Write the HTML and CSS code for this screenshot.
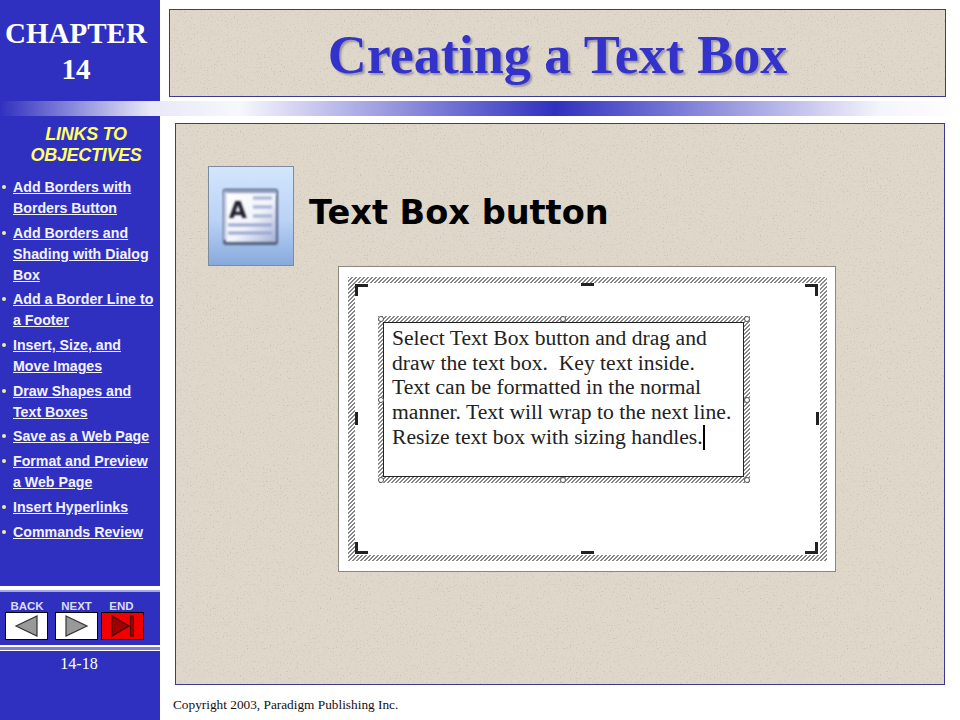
FILE: index.html
```html
<!DOCTYPE html>
<html lang="en">
<head>
<meta charset="utf-8">
<title>Creating a Text Box</title>
<link rel="stylesheet" href="styles.css">
</head>
<body>
<div class="slide">
  <div class="chapter">CHAPTER<br>14</div>
  <header class="title-area">
    <h1 class="title-panel paper">Creating a Text Box</h1>
  </header>
  <div class="band"></div>
  <nav class="sidebar">
    <div class="links-block">
      <h2 class="links-title">LINKS TO<br>OBJECTIVES</h2>
      <ul class="links">
        <li><a href="#">Add Borders with Borders Button</a></li>
        <li><a href="#">Add Borders and Shading with Dialog Box</a></li>
        <li><a href="#">Add a Border Line to a Footer</a></li>
        <li><a href="#">Insert, Size, and Move Images</a></li>
        <li><a href="#">Draw Shapes and Text Boxes</a></li>
        <li><a href="#">Save as a Web Page</a></li>
        <li><a href="#">Format and Preview a Web Page</a></li>
        <li><a href="#">Insert Hyperlinks</a></li>
        <li><a href="#">Commands Review</a></li>
      </ul>
    </div>
    <div class="nav-block">
      <div class="nav-labels">
        <span class="nav-label back">BACK</span>
        <span class="nav-label next">NEXT</span>
        <span class="nav-label end">END</span>
      </div>
      <div class="nav-buttons">
        <a class="nav-btn" href="#"><svg width="41" height="26" viewBox="0 0 41 26"><polygon points="10,13 31,3 31,23" fill="#999" stroke="#333" stroke-width="1.2"/></svg></a>
        <a class="nav-btn" href="#"><svg width="41" height="26" viewBox="0 0 41 26"><polygon points="10,3 31,13 10,23" fill="#999" stroke="#333" stroke-width="1.2"/></svg></a>
        <a class="nav-btn end-btn" href="#"><svg width="41" height="26" viewBox="0 0 41 26"><polygon points="10,3 27,13 10,23" fill="#a00000" stroke="#400" stroke-width="1.2"/><rect x="28.5" y="3" width="3" height="20" fill="#a00000" stroke="#400" stroke-width="1"/></svg></a>
      </div>
    </div>
    <div class="page-no">14-18</div>
  </nav>
  <main class="content">
    <section class="main-panel paper">
      <div class="heading-row">
        <svg class="tb-icon" width="86" height="100" viewBox="0 0 86 100">
          <defs>
            <linearGradient id="bg" x1="0" y1="0" x2="0" y2="1">
              <stop offset="0" stop-color="#d3e6fd"/>
              <stop offset="0.55" stop-color="#b9d2f6"/>
              <stop offset="1" stop-color="#86a9dc"/>
            </linearGradient>
            <linearGradient id="doc" x1="0" y1="0" x2="1" y2="1">
              <stop offset="0" stop-color="#ffffff"/>
              <stop offset="0.55" stop-color="#f2f4fb"/>
              <stop offset="1" stop-color="#a3afd8"/>
            </linearGradient>
            <filter id="soft" x="-20%" y="-20%" width="140%" height="140%"><feGaussianBlur stdDeviation="1"/></filter>
            <filter id="softer" x="-20%" y="-20%" width="140%" height="140%"><feGaussianBlur stdDeviation="0.8"/></filter>
          </defs>
          <rect x="0.5" y="0.5" width="85" height="99" fill="url(#bg)" stroke="#7d8b9c"/>
          <rect x="15" y="23" width="55" height="56" rx="3" fill="#52607d" filter="url(#soft)"/>
          <rect x="15" y="23" width="54" height="6" fill="#8a9abb" filter="url(#soft)"/>
          <rect x="15" y="26" width="5" height="48" fill="#b0bdd8" filter="url(#soft)"/>
          <rect x="18" y="27" width="50" height="49" fill="url(#doc)" filter="url(#softer)"/>
          <g filter="url(#softer)">
            <text x="30" y="52" class="icon-a">A</text>
            <path d="M45 32H64M45 41H64M45 50H64" stroke="#a3b1d1" stroke-width="3"/>
            <path d="M20 59H64M20 67H64" stroke="#9aa6cf" stroke-width="3"/>
          </g>
        </svg>
        <h2 class="heading">Text Box button</h2>
      </div>
      <figure class="shot">
        <div class="hatch outer-frame">
          <span class="mark tl"></span><span class="mark tr"></span><span class="mark bl"></span><span class="mark br"></span>
          <span class="mark tm"></span><span class="mark bm"></span><span class="mark lm"></span><span class="mark rm"></span>
          <div class="hatch inner-frame">
            <span class="dot d1"></span><span class="dot d2"></span><span class="dot d3"></span><span class="dot d4"></span>
            <span class="dot d5"></span><span class="dot d6"></span><span class="dot d7"></span><span class="dot d8"></span>
            <p class="box-text">Select Text Box button and drag and<br>draw the text box.&nbsp; Key text inside.<br>Text can be formatted in the normal<br>manner. Text will wrap to the next line.<br>Resize text box with sizing handles.<span class="caret"></span></p>
          </div>
        </div>
      </figure>
    </section>
    <footer class="copyright">Copyright 2003, Paradigm Publishing Inc.</footer>
  </main>
</div>
</body>
</html>
```
FILE: styles.css
```css
* { box-sizing: border-box; }
html, body { margin: 0; padding: 0; background: #fff; }
.slide {
  width: 960px;
  height: 720px;
  overflow: hidden;
  display: grid;
  grid-template-columns: 160px 800px;
  grid-template-rows: 101px 15px 604px;
}
.paper {
  background-color: #dfd7ca;
  background-image: url("data:image/svg+xml,%3Csvg xmlns='http://www.w3.org/2000/svg' width='300' height='300'%3E%3Cfilter id='n' x='0' y='0' width='100%25' height='100%25'%3E%3CfeTurbulence type='fractalNoise' baseFrequency='0.7' numOctaves='1' seed='7' stitchTiles='stitch'/%3E%3CfeColorMatrix values='0 0 0 0 0.5 0 0 0 0 0.44 0 0 0 0 0.36 2.5 0 0 0 -1.45'/%3E%3C/filter%3E%3Crect width='300' height='300' filter='url(%23n)'/%3E%3C/svg%3E");
  border: 1px solid #3a3a96;
}
.chapter {
  background: #3030c0;
  color: #fff;
  font: bold 29px/36px "Liberation Serif", serif;
  text-align: center;
  padding: 15px 8px 0 0;
  white-space: nowrap;
}
.title-area { padding: 9px 14px 4px 9px; }
.title-panel {
  margin: 0;
  height: 88px;
  color: #3333cc;
  font: bold 54px/90px "Liberation Serif", serif;
  text-align: center;
  text-shadow: 2px 2px 2px #9a96a0;
}
.band {
  grid-column: 1 / 3;
  background: linear-gradient(90deg, #3030c0 0, #e8e8f8 150px, #f7f7fd 240px, #3030c0 555px, #f4f4fc 880px, #fff 960px);
}
.sidebar {
  background: #3030c0;
  display: flex;
  flex-direction: column;
  height: 604px;
}
.links-block { height: 470px; padding-top: 8px; }
.links-title {
  margin: 0 0 11px;
  color: #ffff66;
  font: italic bold 18px/21px "Liberation Sans", sans-serif;
  letter-spacing: -0.3px;
  text-align: center;
  padding-left: 12px;
}
.links {
  list-style: none;
  margin: 0;
  padding: 0;
  display: flex;
  flex-direction: column;
  gap: 3.9px;
}
.links li {
  position: relative;
  padding: 0 4px 0 13px;
  font: bold 14.2px/20.9px "Liberation Sans", sans-serif;
}
.links li::before {
  content: "";
  position: absolute;
  left: 2px;
  top: 8px;
  width: 4px;
  height: 4px;
  border-radius: 50%;
  background: #f0f0a0;
}
.links a { color: #f2f2ff; text-decoration: underline; }
.nav-block {
  height: 61px;
  border-top: 4px solid #fff;
  border-bottom: 2px solid #fff;
  background: linear-gradient(#a5a5e8 0 2px, transparent 2px) top / 100% 2px no-repeat;
}
.nav-labels {
  display: flex;
  padding-top: 10px;
  height: 22px;
}
.nav-label {
  color: #dcdcff;
  font: bold 11.5px/12px "Liberation Sans", sans-serif;
  text-align: center;
}
.back { width: 54px; }
.next { width: 45px; }
.end { width: 45px; }
.nav-buttons {
  display: flex;
  gap: 7px;
  padding-left: 5px;
}
.nav-btn {
  width: 43px;
  height: 28px;
  background: #fff;
  border: 1px solid #000;
  display: block;
}
.nav-btn svg { display: block; }
.nav-btn + .nav-btn + .nav-btn { margin-left: -4px; }
.end-btn { background: #f00000; }
.page-no {
  color: #fff;
  font: 16px/18px "Liberation Serif", serif;
  text-align: center;
  padding: 5px 2px 0 0;
  border-top: 3px solid #7f7fd8;
  box-shadow: inset 0 1px #fff;
}
.content {
  display: flex;
  flex-direction: column;
  padding: 7px 15px 0;
}
.main-panel {
  height: 562px;
  width: 770px;
  padding: 42px 0 0 32px;
}
.heading-row {
  display: flex;
  align-items: center;
  gap: 15px;
}
.tb-icon { display: block; flex: none; }
.icon-a {
  font: bold 23px "DejaVu Sans", sans-serif;
  fill: #1e1e2c;
  text-anchor: middle;
}
.heading {
  margin: 0 0 6px;
  color: #000;
  font: bold 33.6px/44px "DejaVu Sans", sans-serif;
  white-space: nowrap;
}
.shot {
  margin: 0 0 0 130px;
  width: 498px;
  height: 306px;
  background: #fff;
  border: 1px solid #8a8880;
  padding: 10px 8px 11px 9px;
}
.hatch {
  background: repeating-linear-gradient(135deg, #888 0 1.3px, #fff 1.3px 2.828px);
  position: relative;
}
.outer-frame {
  width: 479px;
  height: 284px;
  padding: 6px 7px;
}
.outer-frame::before {
  content: "";
  position: absolute;
  inset: 6px 7px;
  background: #fff;
}
.inner-frame {
  position: absolute;
  left: 30px;
  top: 39px;
  width: 372px;
  height: 167px;
  padding: 6px 6px 6px 5px;
}
.box-text {
  margin: 0;
  height: 155px;
  background: #fff;
  border: 1.5px solid #222;
  padding: 3px 0 0 8px;
  color: #222;
  font: 21.6px/24.7px "Liberation Serif", serif;
  white-space: nowrap;
}
.caret {
  display: inline-block;
  width: 2px;
  height: 25px;
  background: #000;
  vertical-align: -6px;
}
.mark { position: absolute; border: 0 solid #222; }
.tl { left: 7px; top: 7px; width: 13px; height: 12px; border-width: 3px 0 0 3px; }
.tr { right: 9px; top: 7px; width: 13px; height: 12px; border-width: 3px 3px 0 0; }
.bl { left: 7px; bottom: 7px; width: 13px; height: 12px; border-width: 0 0 3px 3px; }
.br { right: 9px; bottom: 7px; width: 13px; height: 12px; border-width: 0 3px 3px 0; }
.tm { left: 233px; top: 6px; width: 13px; height: 3px; background: #222; }
.bm { left: 233px; bottom: 7px; width: 13px; height: 3px; background: #222; }
.lm { left: 7px; top: 135px; width: 3px; height: 13px; background: #222; }
.rm { right: 8px; top: 135px; width: 3px; height: 13px; background: #222; }
.dot {
  position: absolute;
  width: 6px;
  height: 6px;
  border-radius: 50%;
  background: #fff;
  border: 1px solid #555;
  z-index: 1;
}
.d1 { left: 0; top: 0; }
.d2 { left: 182px; top: 0; }
.d3 { right: 0; top: 0; }
.d4 { left: 0; top: 81px; }
.d5 { right: 0; top: 81px; }
.d6 { left: 0; bottom: 0; }
.d7 { left: 182px; bottom: 0; }
.d8 { right: 0; bottom: 0; }
.copyright {
  margin-top: 13px;
  margin-left: -2px;
  color: #111;
  font: 13.3px/14px "Liberation Serif", serif;
  white-space: nowrap;
}
```
